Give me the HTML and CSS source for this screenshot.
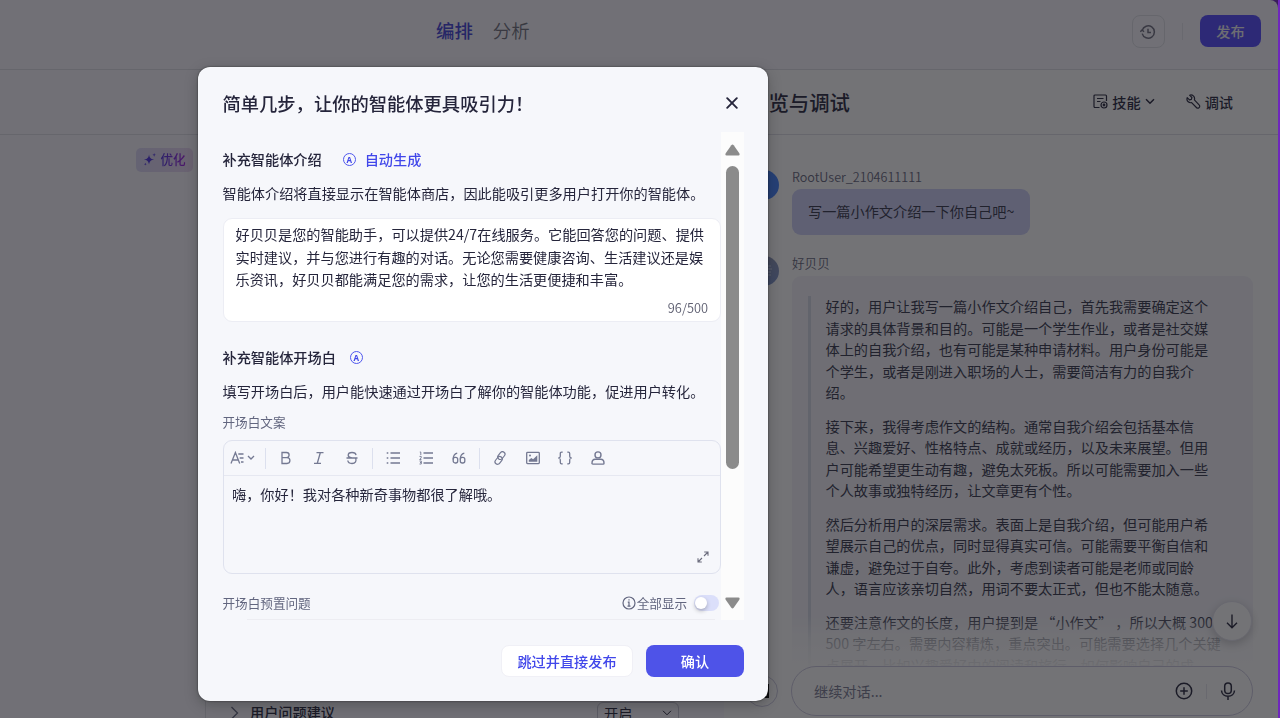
FILE: index.html
```
<!DOCTYPE html>
<html lang="zh-CN">
<head>
  <meta charset="UTF-8" />
  <meta name="viewport" content="width=device-width, initial-scale=1.0"/>
  <title>智能体编排</title>
  <link rel="stylesheet" href="styles.css">
</head>
<body>
  <div class="pagina">
    <header class="topo">
      <nav class="abas">
        <a class="aba ativa">编排</a>
        <a class="aba">分析</a>
      </nav>
      <div class="topo-acoes">
        <button class="btn-historico">
          <svg width="16" height="16" viewBox="0 0 16 16" fill="none" stroke="currentColor" stroke-width="1.5"><path d="M2.2 9.6A6.2 6.2 0 1 0 2.200 6.400"/><path d="M.3 7.800L2.100 6l1.900 1.800M8 4.800v3.800h3"/></svg>
        </button>
        <span class="divisor"></span>
        <button class="btn-publicar">发布</button>
      </div>
    </header>

    <main class="conteudo">
      <section class="painel-config">
        <div class="sub-topo"></div>
        <div class="config-corpo">
          <div class="coluna-prompt">
            <span class="otimizar">
              <svg width="13" height="13" viewBox="0 0 14 14" fill="currentColor"><path d="M6.500 1.500c.6 3.600 1.900 4.900 5.500 5.500-3.600.6-4.900 1.900-5.500 5.500C5.900 8.900 4.600 7.600 1 7c3.600-.6 4.900-1.900 5.500-5.500z"/><path d="M12 0l.5 1.500L14 2l-1.500.5L12 4l-.5-1.500L10 2l1.500-.5zM2.500 10.500l.4 1.100 1.100.4-1.100.4-.4 1.100-.4-1.100L1 12l1.100-.4z"/></svg>
              <b>优化</b>
            </span>
          </div>
          <div class="coluna-opcoes">
            <div class="opcao">
              <svg width="9" height="14" viewBox="0 0 9 14" fill="none" stroke="currentColor" stroke-width="1.3"><path d="M1.500 1l6 6-6 6"/></svg>
              <span class="opcao-nome">用户问题建议</span>
              <span class="seletor">开启
                <svg width="10" height="6" viewBox="0 0 10 6" fill="none" stroke="currentColor" stroke-width="1"><path d="M1 .8l4 4 4-4"/></svg>
              </span>
            </div>
          </div>
        </div>
      </section>

      <section class="painel-chat">
        <div class="sub-topo chat-topo">
          <h2>预览与调试</h2>
          <div class="chat-menu">
            <span class="menu-item">
              <svg width="15" height="15" viewBox="0 0 15 15" fill="none" stroke="currentColor" stroke-width="1.200"><path d="M6.500 13.500H2a1 1 0 0 1-1-1V2a1 1 0 0 1 1-1h10.500a1 1 0 0 1 1 1v5M4 4.500h6.500M4 7.500h3.500"/><circle cx="11" cy="11" r="3"/><circle cx="11" cy="11" r=".8"/></svg>
              技能
              <svg width="10" height="7" viewBox="0 0 10 7" fill="none" stroke="currentColor" stroke-width="1.500"><path d="M1 1.200l4 4 4-4"/></svg>
            </span>
            <span class="menu-item">
              <svg width="15" height="15" viewBox="0 0 15 15" fill="none" stroke="currentColor" stroke-width="1.200" stroke-linejoin="round"><path d="M3.600 1.200l2.300 2.300-.5 1.900-1.900.5L1.200 3.600c-.6 1.800 0 3.300 1 4.200 1 .9 2.300 1.100 3.400.8l4.800 4.900c.8.8 2 .8 2.700.1.800-.8.800-1.900 0-2.700L8.400 5.800c.4-1.300.1-2.600-.8-3.600-1-1-2.500-1.500-4-1z"/></svg>
              调试
            </span>
          </div>
        </div>

        <div class="conversa">
          <div class="mensagem">
            <span class="avatar avatar-usuario"></span>
            <div class="mensagem-corpo">
              <p class="autor">RootUser_2104611111</p>
              <div class="balao balao-usuario">写一篇小作文介绍一下你自己吧~</div>
            </div>
          </div>
          <div class="mensagem">
            <span class="avatar avatar-bot">
              <svg width="12" height="14" viewBox="0 0 12 14" fill="none" stroke="currentColor" stroke-width="1.200"><path d="M1 2h8M0 5h10M1 8h8M1 11h8"/></svg>
            </span>
            <div class="mensagem-corpo">
              <p class="autor">好贝贝</p>
              <div class="balao balao-bot">
                <div class="citacao">
                  <p>好的，用户让我写一篇小作文介绍自己，首先我需要确定这个<br>请求的具体背景和目的。可能是一个学生作业，或者是社交媒<br>体上的自我介绍，也有可能是某种申请材料。用户身份可能是<br>个学生，或者是刚进入职场的人士，需要简洁有力的自我介<br>绍。</p>
                  <p>接下来，我得考虑作文的结构。通常自我介绍会包括基本信<br>息、兴趣爱好、性格特点、成就或经历，以及未来展望。但用<br>户可能希望更生动有趣，避免太死板。所以可能需要加入一些<br>个人故事或独特经历，让文章更有个性。</p>
                  <p>然后分析用户的深层需求。表面上是自我介绍，但可能用户希<br>望展示自己的优点，同时显得真实可信。可能需要平衡自信和<br>谦虚，避免过于自夸。此外，考虑到读者可能是老师或同龄<br>人，语言应该亲切自然，用词不要太正式，但也不能太随意。</p>
                  <p>还要注意作文的长度，用户提到是 “小作文” ，所以大概 300-<br>500 字左右。需要内容精炼，重点突出。可能需要选择几个关键<br>点展开，比如兴趣爱好中的阅读和旅行，如何影响自己的成</p>
                </div>
              </div>
            </div>
          </div>
          <div class="esmaecer"></div>
          <button class="btn-descer">
            <svg width="12" height="15" viewBox="0 0 12 15" fill="none" stroke="currentColor" stroke-width="1.400"><path d="M6 .5v13M1 8.800l5 5 5-5"/></svg>
          </button>
        </div>

        <div class="entrada-linha">
          <button class="btn-limpar">
            <svg width="16" height="16" viewBox="0 0 16 16" fill="none" stroke="currentColor" stroke-width="2"><path d="M2 2h12v12H2z"/></svg>
          </button>
          <div class="entrada">
            <span class="entrada-texto">继续对话...</span>
            <svg width="18" height="18" viewBox="0 0 18 18" fill="none" stroke="currentColor" stroke-width="1.500"><circle cx="9" cy="9" r="7.700"/><path d="M9 5.200v7.600M5.200 9h7.600"/></svg>
            <span class="entrada-divisor"></span>
            <svg width="16" height="18" viewBox="0 0 16 18" fill="none" stroke="currentColor" stroke-width="1.500"><rect x="4.700" y="1" width="6.600" height="10.500" rx="3.300"/><path d="M1.500 8.500c.2 3.500 3 5.800 6.500 5.800s6.300-2.300 6.500-5.800M8 14.300V18"/></svg>
          </div>
        </div>
      </section>
    </main>
  </div>

  <div class="mascara">
    <div class="modal">
      <div class="modal-topo">
        <h1>简单几步，让你的智能体更具吸引力！</h1>
        <svg class="fechar" width="12" height="12" viewBox="0 0 12 12" fill="none" stroke="currentColor" stroke-width="1.900" stroke-linecap="round"><path d="M1.200 1.200l9.600 9.600M10.800 1.200l-9.600 9.600"/></svg>
      </div>

      <div class="modal-corpo">
        <div class="formulario">
          <div class="titulo-linha">
            <h3>补充智能体介绍</h3>
            <span class="auto"><i class="icone-a">A</i>自动生成</span>
          </div>
          <p class="descricao">智能体介绍将直接显示在智能体商店，因此能吸引更多用户打开你的智能体。</p>
          <div class="area-texto">
            <p>好贝贝是您的智能助手，可以提供24/7在线服务。它能回答您的问题、提供<br>实时建议，并与您进行有趣的对话。无论您需要健康咨询、生活建议还是娱<br>乐资讯，好贝贝都能满足您的需求，让您的生活更便捷和丰富。</p>
            <span class="contador">96/500</span>
          </div>

          <div class="titulo-linha segundo">
            <h3>补充智能体开场白</h3>
            <span class="auto"><i class="icone-a">A</i></span>
          </div>
          <p class="descricao">填写开场白后，用户能快速通过开场白了解你的智能体功能，促进用户转化。</p>
          <p class="rotulo">开场白文案</p>

          <div class="editor">
            <div class="barra">
              <span class="ferramenta fonte"><svg width="26" height="14" viewBox="0 0 26 14" fill="none" stroke="currentColor" stroke-width="1.300"><path d="M1 12.500L5.400 1.500l4.300 11M2.600 9h5.600M8.300 3h5.200M9.700 7h3.800M11 11h2.500M18 5l3 3 3-3"/></svg></span>
              <span class="sep"></span>
              <span class="ferramenta"><svg width="14" height="14" viewBox="0 0 14 14" fill="none" stroke="currentColor" stroke-width="1.300"><path d="M3 1.500h4.500a2.600 2.600 0 0 1 0 5.200H3zM3 6.700h5a2.900 2.900 0 0 1 0 5.800H3z"/></svg></span>
              <span class="ferramenta"><svg width="14" height="14" viewBox="0 0 14 14" fill="none" stroke="currentColor" stroke-width="1.300"><path d="M4.500 1.700h7M2 12.300h7M8.300 1.700L5.300 12.300"/></svg></span>
              <span class="ferramenta"><svg width="14" height="14" viewBox="0 0 14 14" fill="none" stroke="currentColor" stroke-width="1.300"><path d="M11 4.200C10.800 2.500 9.300 1.500 7 1.500S3.200 2.600 3.200 4.200c0 1.600 1.400 2.300 3.800 2.800M1.500 7h11M10.500 7c1.500 3-.2 5.500-3.500 5.500-2.400 0-4-1.100-4.200-3"/></svg></span>
              <span class="sep"></span>
              <span class="ferramenta"><svg width="14" height="14" viewBox="0 0 14 14" fill="none" stroke="currentColor" stroke-width="1.300"><path d="M4.500 2H14M4.500 7H14M4.500 12H14M.7 2h1.600M.7 7h1.600M.7 12h1.600"/></svg></span>
              <span class="ferramenta"><svg width="14" height="14" viewBox="0 0 14 14" fill="none" stroke="currentColor" stroke-width="1.300"><path d="M4.500 2H14M4.500 7H14M4.500 12H14"/><path stroke-width=".9" d="M.8 1h1v3M.5 5.400h1.700v1.500L.7 8.500h1.700M.5 10h1.800v3H.5M1 11.500h1.300"/></svg></span>
              <span class="ferramenta"><svg width="14" height="14" viewBox="0 0 14 14" fill="none" stroke="currentColor" stroke-width="1.300"><path d="M5.200 2.200C2.500 2.800 1.200 5 1.200 8.500"/><rect x="1.200" y="6.300" width="4.500" height="5.700" rx="2"/><path d="M12.300 2.200c-2.700.6-4 2.800-4 6.300"/><rect x="8.300" y="6.300" width="4.500" height="5.700" rx="2"/></svg></span>
              <span class="sep"></span>
              <span class="ferramenta"><svg width="14" height="14" viewBox="0 0 14 14" fill="none" stroke="currentColor" stroke-width="1.200"><g transform="rotate(-52 7 7)"><rect x="0" y="4.900" width="8.500" height="5" rx="2.500"/><rect x="5.500" y="4.100" width="8.500" height="5" rx="2.500"/></g></svg></span>
              <span class="ferramenta"><svg width="14" height="14" viewBox="0 0 14 14" fill="none" stroke="currentColor" stroke-width="1.300"><rect x=".7" y="1.400" width="12.600" height="11.200" rx=".8"/><path fill="currentColor" stroke="none" d="M2.800 10.700V9l2.500-2 1.800 1.300 4.200-4v6.400z"/><circle cx="4" cy="4.500" r="1" fill="currentColor" stroke="none"/></svg></span>
              <span class="ferramenta"><svg width="14" height="14" viewBox="0 0 14 14" fill="none" stroke="currentColor" stroke-width="1.300"><path d="M4.700 1.200H3.600c-.9 0-1.300.5-1.300 1.300v2.700c0 .9-.5 1.500-1.500 1.800 1 .3 1.500.9 1.500 1.800v2.700c0 .8.400 1.300 1.300 1.300h1.100M9.300 1.200h1.100c.9 0 1.300.5 1.300 1.300v2.700c0 .9.5 1.500 1.500 1.800-1 .3-1.500.9-1.500 1.800v2.700c0 .8-.4 1.300-1.300 1.300H9.300"/></svg></span>
              <span class="ferramenta"><svg width="14" height="14" viewBox="0 0 14 14" fill="none" stroke="currentColor" stroke-width="1.400"><circle cx="7" cy="3.900" r="3"/><path d="M1 12.200c0-2.600 1.300-3.900 3.300-3.900h5.400c2 0 3.300 1.300 3.300 3.900 0 .6-.3.900-.9.900H1.900c-.6 0-.9-.3-.9-.9z"/></svg></span>
            </div>
            <div class="editor-texto">嗨，你好！我对各种新奇事物都很了解哦。
              <svg class="expandir" width="12" height="12" viewBox="0 0 12 12" fill="none" stroke="currentColor" stroke-width="1.100"><path d="M7.200 1H11v3.800M11 1L7 5M4.800 11H1V7.200M1 11l4-4"/></svg>
            </div>
          </div>

          <div class="perguntas">
            <span class="rotulo">开场白预置问题</span>
            <div class="mostrar">
              <svg width="14" height="14" viewBox="0 0 14 14" fill="none" stroke="currentColor" stroke-width="1.200"><circle cx="7" cy="7" r="6"/><path d="M7 3.300v1.300M5.800 6.200H7v4M5.500 10.200h3"/></svg>
              <span>全部显示</span>
              <span class="interruptor"></span>
            </div>
          </div>
          <div class="lista-perguntas"></div>
        </div>

        <div class="rolagem">
          <svg width="15" height="12" viewBox="0 0 15 12"><path fill="#8b8b8b" d="M6.300 1.200Q7.500-.2 8.700 1.200l5.600 8q1 2.300-1 2.300H1.700q-2 0-1-2.300z"/></svg>
          <span class="polegar"></span>
          <svg class="seta-baixo" width="15" height="12" viewBox="0 0 15 12"><path fill="#8b8b8b" d="M6.300 10.800q1.200 1.400 2.400 0l5.600-8q1-2.300-1-2.300H1.700q-2 0-1 2.300z"/></svg>
        </div>
      </div>

      <div class="modal-rodape">
        <button class="btn-pular">跳过并直接发布</button>
        <button class="btn-confirmar">确认</button>
      </div>
    </div>
  </div>
</body>
</html>
```
FILE: styles.css
```
* {
  box-sizing: border-box;
}

body {
  margin: 0;
  height: 718px;
  overflow: hidden;
  background: #6f27bd;
  font-family: "Noto Sans CJK SC", sans-serif;
  font-size: 14.18px;
  font-weight: 400;
  color: #25253b;
}

h1, h2, h3, p {
  margin: 0;
}

button {
  font-family: inherit;
  padding: 0;
  border: none;
}

svg {
  display: block;
  flex: none;
}

.pagina {
  width: 1278px;
  height: 718px;
  display: flex;
  flex-direction: column;
  background: #f9f8fe;
  border-top-right-radius: 8px;
  overflow: hidden;
}

.topo {
  height: 70px;
  flex: none;
  display: flex;
  justify-content: space-between;
  padding: 0 17px 0 436px;
  border-bottom: 1px solid #dedee6;
}

.abas {
  display: flex;
  gap: 20px;
  font-size: 18.4px;
  line-height: 60px;
}

.aba {
  color: #6e6e7c;
  font-weight: 350;
}

.ativa {
  color: #4040d8;
  font-weight: 500;
}

.topo-acoes {
  display: flex;
  padding-top: 15px;
}

.btn-historico {
  width: 33px;
  height: 33px;
  display: flex;
  align-items: center;
  justify-content: center;
  padding-right: 2px;
  color: #6f6e80;
  background: transparent;
  border: 1px solid #dfdfe7;
  border-radius: 8px;
}

.divisor {
  width: 1px;
  height: 17px;
  margin: 8px 17px;
  background: #e6e6ee;
}

.btn-publicar {
  width: 61px;
  height: 32px;
  padding-bottom: 1px;
  font-size: 14.2px;
  font-weight: 500;
  color: #f0f0f4;
  background: #5147ff;
  border-radius: 8px;
}

.conteudo {
  flex: 1;
  display: flex;
  min-height: 0;
}

.painel-config {
  width: 724px;
  display: flex;
  flex-direction: column;
}

.sub-topo {
  height: 65px;
  flex: none;
  border-bottom: 1px solid #dedee6;
}

.config-corpo {
  flex: 1;
  display: flex;
}

.coluna-prompt {
  width: 206px;
  padding: 13px 12px 0 0;
  display: flex;
  justify-content: flex-end;
  align-items: flex-start;
  border-right: 1px solid #dedee6;
}

.otimizar {
  width: 57px;
  height: 24px;
  display: flex;
  align-items: center;
  justify-content: center;
  gap: 4px;
  font-size: 12.6px;
  line-height: 22px;
  padding-bottom: 2px;
  color: #4a2fe0;
  background: linear-gradient(90deg, #dcd8f7, #e9d6f3);
  border-radius: 5px;
}

.otimizar b {
  font-weight: 500;
  background: linear-gradient(90deg, #4a2fe0, #a01be0);
  -webkit-background-clip: text;
  color: transparent;
}

.coluna-opcoes {
  flex: 1;
  display: flex;
  align-items: flex-end;
}

.opcao {
  width: 449px;
  height: 16px;
  margin-left: 24px;
  display: flex;
  align-items: flex-start;
  white-space: nowrap;
}

.opcao > svg {
  margin-top: 4px;
  color: #62667f;
}

.opcao-nome {
  margin-left: 11px;
  font-weight: 500;
  line-height: 20px;
}

.seletor {
  width: 82px;
  height: 24px;
  margin-left: auto;
  padding: 0 6px 2px;
  display: flex;
  align-items: center;
  justify-content: space-between;
  line-height: 20px;
  border: 1px solid #c5c5d3;
  border-radius: 6px;
}

.painel-chat {
  flex: 1;
  display: flex;
  flex-direction: column;
  min-width: 0;
  background: #fff;
}

.chat-topo {
  display: flex;
  align-items: center;
  justify-content: space-between;
  padding: 0 45px 0 24px;
}

.chat-topo h2 {
  font-size: 20.4px;
  font-weight: 500;
}

.chat-menu {
  display: flex;
  gap: 31px;
  line-height: 20px;
  padding-bottom: 1px;
  font-weight: 500;
}

.menu-item {
  display: flex;
  align-items: center;
  gap: 4px;
}

.conversa {
  position: relative;
  flex: 1;
  min-height: 0;
  padding: 32px 25px 0;
  overflow: hidden;
}

.mensagem {
  display: flex;
  gap: 13px;
  margin-bottom: 18px;
}

.avatar {
  width: 30px;
  height: 30px;
  margin-top: 3px;
  flex: none;
  display: flex;
  align-items: center;
  justify-content: flex-end;
  padding-right: 5px;
  border-radius: 50%;
  color: #c3cfe8;
}

.avatar-usuario {
  background: #3f80ff;
}

.avatar-bot {
  background: linear-gradient(#8c96b8, #7a93cd);
}

.mensagem-corpo {
  flex: 1;
}

.autor {
  font-size: 12.6px;
  font-weight: 350;
  line-height: 20px;
  color: #64657b;
  margin-bottom: 2px;
}

.balao {
  border-radius: 9px;
  color: #33354a;
}

.balao-usuario {
  width: 238px;
  padding: 0 16px;
  line-height: 45px;
  height: 46px;
  background: #cccff8;
  white-space: nowrap;
}

.balao-bot {
  margin-top: 3px;
  padding: 20px 16px;
  background: #f4f3fa;
}

.citacao {
  padding-left: 14.5px;
  border-left: 3px solid #d5dae6;
  line-height: 21.5px;
  white-space: nowrap;
}

.citacao p {
  margin-bottom: 12px;
}

.esmaecer {
  position: absolute;
  left: 0;
  right: 0;
  bottom: 0;
  height: 50px;
  background: linear-gradient(rgba(255, 255, 255, 0), rgba(255, 255, 255, 0.6) 45%, rgba(255, 255, 255, 0.95));
}

.btn-descer {
  position: absolute;
  right: 26px;
  bottom: 25px;
  width: 40px;
  height: 40px;
  display: flex;
  align-items: center;
  justify-content: center;
  color: #25253b;
  background: #fff;
  border: 1px solid #e4e3ee;
  border-radius: 50%;
  box-shadow: 0 3px 10px rgba(0, 0, 0, 0.2);
}

.entrada-linha {
  height: 52px;
  flex: none;
  display: flex;
  align-items: flex-start;
  gap: 13px;
  padding: 0 25px 0 22px;
}

.btn-limpar {
  width: 32px;
  height: 32px;
  margin-top: 9px;
  display: flex;
  align-items: center;
  justify-content: center;
  background: #fff;
  border: 1px solid #cbc9df;
  border-radius: 50%;
}

.entrada {
  flex: 1;
  height: 50px;
  display: flex;
  align-items: center;
  padding: 0 16px 0 22px;
  border: 1px solid #cbc9df;
  border-radius: 25px;
}

.entrada-texto {
  flex: 1;
  line-height: 22px;
  padding-bottom: 1px;
  color: #797a92;
}

.entrada-divisor {
  width: 1px;
  height: 15px;
  margin: 0 13px;
  background: #e6e6ee;
}

.mascara {
  position: fixed;
  top: 0;
  left: 0;
  width: 1278px;
  height: 718px;
  background: rgba(22, 22, 26, 0.6);
}

.modal {
  width: 570px;
  height: 634px;
  margin: 67px 0 0 198px;
  padding: 0 24px 0 24.5px;
  display: flex;
  flex-direction: column;
  background: #f6f7fb;
  border-radius: 12px;
  box-shadow: 0 0 2px rgba(0, 0, 0, 0.6), 0 4px 14px rgba(0, 0, 0, 0.25);
}

.modal-topo {
  height: 65px;
  flex: none;
  display: flex;
  align-items: center;
  justify-content: space-between;
  padding: 7px 6.5px 0 0;
}

.modal-topo h1 {
  font-size: 18.3px;
  line-height: 26px;
  font-weight: 500;
}

.modal-corpo {
  height: 488px;
  flex: none;
  display: flex;
}

.formulario {
  width: 498.5px;
  padding-top: 16px;
  overflow: hidden;
}

.titulo-linha {
  height: 22px;
  display: flex;
  align-items: center;
}

.titulo-linha h3 {
  font-size: 14.18px;
  font-weight: 500;
}

.segundo {
  margin-top: 24px;
}

.auto {
  display: flex;
  align-items: center;
  gap: 9px;
  margin-left: 21px;
  font-weight: 500;
  color: #4147ea;
}

.segundo .auto {
  margin-left: 14px;
}

.icone-a {
  width: 13px;
  height: 13px;
  border: 1.2px solid #5058ee;
  border-radius: 50%;
  font: 700 8px/11px "Noto Sans", sans-serif;
  text-align: center;
}

.descricao {
  height: 22px;
  margin-top: 12px;
  line-height: 22px;
  white-space: nowrap;
}

.area-texto {
  height: 104px;
  margin-top: 14px;
  padding: 4px 12px 0;
  line-height: 22.6px;
  white-space: nowrap;
  background: #fff;
  border: 1px solid #ecedf4;
  border-radius: 9px;
}

.contador {
  display: block;
  margin-top: 6px;
  font-size: 12.8px;
  font-weight: 350;
  line-height: 22px;
  text-align: right;
  color: #5d5e70;
}

.rotulo {
  font-size: 12.6px;
  line-height: 20px;
  color: #62667f;
}

p.rotulo {
  margin-top: 10px;
}

.editor {
  height: 134px;
  margin-top: 8px;
  border: 1px solid #dfe2ee;
  border-radius: 9px;
}

.barra {
  height: 35px;
  display: flex;
  align-items: center;
  color: #747992;
  border-bottom: 1px solid #e6e8f1;
}

.ferramenta {
  width: 32.8px;
  display: flex;
  justify-content: center;
}

.fonte {
  width: 38px;
}

.sep {
  width: 1px;
  height: 21px;
  margin: 0 3.7px;
  background: #dce0ee;
}

.editor-texto {
  position: relative;
  height: 97px;
  padding: 7px 8.5px;
  line-height: 22px;
}

.expandir {
  position: absolute;
  right: 11px;
  bottom: 10px;
  color: #6b6c7d;
}

.perguntas {
  height: 20px;
  margin-top: 19px;
  display: flex;
  justify-content: space-between;
  align-items: center;
}

.mostrar {
  display: flex;
  align-items: center;
  font-size: 12.6px;
  line-height: 20px;
  color: #62667f;
}

.mostrar svg {
  margin-right: 1px;
}

.interruptor {
  width: 25px;
  height: 16px;
  margin: 0 2px 0 7px;
  background: #dbdffa;
  border-radius: 8px;
}

.interruptor::before {
  content: "";
  display: block;
  width: 12px;
  height: 12px;
  margin: 2px 0 0 1px;
  background: #fff;
  border-radius: 50%;
  box-shadow: 0 2px 4px rgba(0, 0, 0, 0.25);
}

.lista-perguntas {
  height: 40px;
  margin: 6px 6px 0 24px;
  border-top: 1px solid #ededf2;
}

.rolagem {
  width: 23px;
  padding: 12px 0 11px;
  display: flex;
  flex-direction: column;
  align-items: center;
  background: #fcfcfc;
}

.polegar {
  width: 13px;
  height: 303px;
  margin-top: 10px;
  background: #8b8b8b;
  border-radius: 7px;
}

.seta-baixo {
  margin-top: auto;
}

.modal-rodape {
  display: flex;
  justify-content: flex-end;
  gap: 13px;
  padding-top: 25px;
}

.modal-rodape button {
  height: 32px;
  padding-bottom: 1px;
  font-size: 14.18px;
  font-weight: 500;
  border-radius: 8px;
}

.btn-pular {
  width: 132px;
  color: #4147ea;
  background: #fff;
  border: 1px solid #f0f0f6;
}

.btn-confirmar {
  width: 98px;
  color: #fff;
  background: #4e53e8;
}
```
